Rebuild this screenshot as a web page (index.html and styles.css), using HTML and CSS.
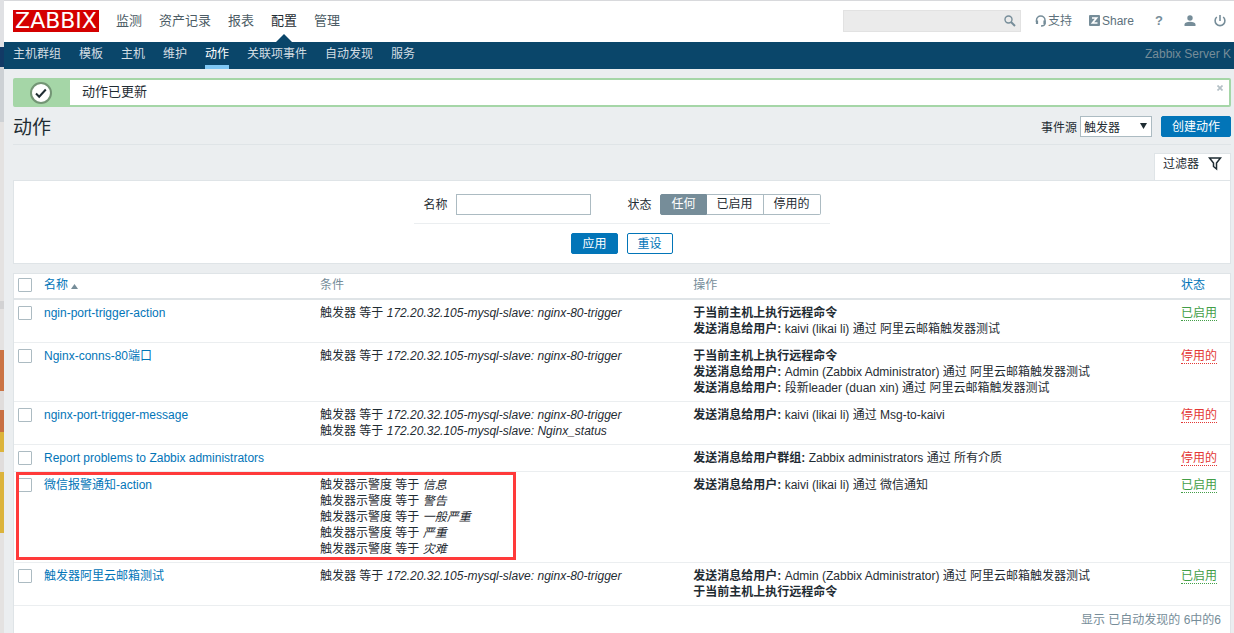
FILE: index.html
```html
<!DOCTYPE html>
<html lang="zh-CN">
<head>
<meta charset="utf-8">
<title>动作</title>
<link rel="stylesheet" href="styles.css">
</head>
<body>
<div class="backdrop"></div>
<div class="page">
  <header class="top">
    <a class="logo" href="#">ZABBIX</a>
    <nav class="menu">
      <a href="#">监测</a>
      <a href="#">资产记录</a>
      <a href="#">报表</a>
      <a href="#" class="active">配置</a>
      <a href="#">管理</a>
    </nav>
    <div class="tools">
      <form class="search">
        <input type="text" aria-label="搜索">
        <button type="button" aria-label="搜索"><svg width="12" height="12" viewBox="0 0 12 12" fill="none" stroke="#768d99"><circle cx="4.5" cy="4.5" r="3.5" stroke-width="1.4"/><path d="M7 7l4 4" stroke-width="2"/></svg></button>
      </form>
      <a href="#" class="support"><svg width="12" height="12" viewBox="0 0 12 12" fill="none" stroke="#768d99"><path d="M1.500 7V5.200a4.200 4.200 0 0 1 8.500 0V8c0 2-1 3-4 3" stroke-width="1.500"/><path d="M2 5.500v3.500M9.500 5.500v3.500" stroke-width="2.200"/></svg>支持</a>
      <a href="#" class="share"><svg width="12" height="12" viewBox="0 0 12 12"><rect width="11" height="11" rx="1" fill="#768d99"/><path d="M3 3h4.500L3.500 8H8.500" fill="none" stroke="#fff" stroke-width="1.700"/></svg>Share</a>
      <a href="#" class="help">?</a>
      <a href="#" class="user" aria-label="用户"><svg width="12" height="12" viewBox="0 0 12 12" fill="#768d99"><circle cx="6" cy="3" r="2.700"/><path d="M.5 11V9.500c0-1.700 2.500-2.700 5.500-2.700s5.500 1 5.500 2.700V11z"/></svg></a>
      <a href="#" class="power" aria-label="退出"><svg width="12" height="12" viewBox="0 0 12 12" fill="none" stroke="#768d99" stroke-width="1.600"><path d="M2.800 2a4.900 4.900 0 1 0 6.400 0M6 0v6"/></svg></a>
    </div>
  </header>
  <nav class="submenu">
    <a href="#">主机群组</a>
    <a href="#">模板</a>
    <a href="#">主机</a>
    <a href="#">维护</a>
    <a href="#" class="active">动作</a>
    <a href="#">关联项事件</a>
    <a href="#">自动发现</a>
    <a href="#">服务</a>
    <span class="server">Zabbix Server K</span>
  </nav>
  <main>
    <div class="message">
      <span class="message-icon"><svg width="22" height="22" viewBox="0 0 22 22"><circle cx="11" cy="11" r="10" fill="#fff" stroke="#739575" stroke-width="2"/><path d="M6 11.500l3.200 3.200L15.800 7.500" fill="none" stroke="#1f2c33" stroke-width="2"/></svg></span>
      <span class="message-text">动作已更新</span>
      <button type="button" class="close" aria-label="关闭"><svg width="6" height="6" viewBox="0 0 6 6" stroke="#b4c0c6" stroke-width="1.700"><path d="M.5.5l5 5M5.500.5l-5 5"/></svg></button>
    </div>

    <div class="title-bar">
      <h1>动作</h1>
      <form class="title-form">
        <label for="source">事件源</label>
        <span class="select-box">
          <select id="source"><option>触发器</option></select>
          <svg class="arrow" width="7" height="6" viewBox="0 0 7 6"><path d="M0 0h7L3.500 6z" fill="#1f2c33"/></svg>
        </span>
        <button type="button" class="button">创建动作</button>
      </form>
    </div>

    <div class="tab-row">
      <a href="#" class="filter-tab">过滤器<svg width="14" height="14" viewBox="0 0 14 14" fill="none" stroke="#1f2c33" stroke-width="1.500"><path d="M1.500 1h11L8.500 6v6L5.500 9.500V6z"/></svg></a>
    </div>
    <form class="filter">
      <div class="fields">
        <label for="name">名称</label>
        <input type="text" id="name" class="text-input">
        <span class="state-label" id="state-label">状态</span>
        <div class="segments" role="radiogroup" aria-labelledby="state-label">
          <input type="radio" name="state" id="any" checked><label for="any">任何</label>
          <input type="radio" name="state" id="on"><label for="on">已启用</label>
          <input type="radio" name="state" id="off"><label for="off">停用的</label>
        </div>
      </div>
      <div class="buttons">
        <button type="button" class="button">应用</button>
        <button type="button" class="button outline">重设</button>
      </div>
    </form>

    <div class="list">
      <table>
        <colgroup><col class="c-check"><col class="c-name"><col class="c-cond"><col><col class="c-state"></colgroup>
        <thead>
          <tr><th><input type="checkbox" aria-label="全选"></th><th><a href="#">名称<svg class="sort" width="7" height="5" viewBox="0 0 7 5"><path d="M0 5h7L3.500 0z" fill="#768d99"/></svg></a></th><th>条件</th><th>操作</th><th><a href="#">状态</a></th></tr>
        </thead>
        <tbody>
          <tr>
            <td><input type="checkbox" aria-label="ngin-port-trigger-action"></td>
            <td><a href="#">ngin-port-trigger-action</a></td>
            <td>触发器 等于 <em>172.20.32.105-mysql-slave: nginx-80-trigger</em></td>
            <td><b>于当前主机上执行远程命令</b><br><b>发送消息给用户:</b> kaivi (likai li) 通过 阿里云邮箱触发器测试</td>
            <td><a href="#" class="state on">已启用</a></td>
          </tr>
          <tr>
            <td><input type="checkbox" aria-label="Nginx-conns-80端口"></td>
            <td><a href="#">Nginx-conns-80端口</a></td>
            <td>触发器 等于 <em>172.20.32.105-mysql-slave: nginx-80-trigger</em></td>
            <td><b>于当前主机上执行远程命令</b><br><b>发送消息给用户:</b> Admin (Zabbix Administrator) 通过 阿里云邮箱触发器测试<br><b>发送消息给用户:</b> 段新leader (duan xin) 通过 阿里云邮箱触发器测试</td>
            <td><a href="#" class="state off">停用的</a></td>
          </tr>
          <tr>
            <td><input type="checkbox" aria-label="nginx-port-trigger-message"></td>
            <td><a href="#">nginx-port-trigger-message</a></td>
            <td>触发器 等于 <em>172.20.32.105-mysql-slave: nginx-80-trigger</em><br>触发器 等于 <em>172.20.32.105-mysql-slave: Nginx_status</em></td>
            <td><b>发送消息给用户:</b> kaivi (likai li) 通过 Msg-to-kaivi</td>
            <td><a href="#" class="state off">停用的</a></td>
          </tr>
          <tr>
            <td><input type="checkbox" aria-label="Report problems to Zabbix administrators"></td>
            <td><a href="#">Report problems to Zabbix administrators</a></td>
            <td></td>
            <td><b>发送消息给用户群组:</b> Zabbix administrators 通过 所有介质</td>
            <td><a href="#" class="state off">停用的</a></td>
          </tr>
          <tr>
            <td class="marked"><input type="checkbox" aria-label="微信报警通知-action"><span class="marker"></span></td>
            <td><a href="#">微信报警通知-action</a></td>
            <td>触发器示警度 等于 <em>信息</em><br>触发器示警度 等于 <em>警告</em><br>触发器示警度 等于 <em>一般严重</em><br>触发器示警度 等于 <em>严重</em><br>触发器示警度 等于 <em>灾难</em></td>
            <td><b>发送消息给用户:</b> kaivi (likai li) 通过 微信通知</td>
            <td><a href="#" class="state on">已启用</a></td>
          </tr>
          <tr>
            <td><input type="checkbox" aria-label="触发器阿里云邮箱测试"></td>
            <td><a href="#">触发器阿里云邮箱测试</a></td>
            <td>触发器 等于 <em>172.20.32.105-mysql-slave: nginx-80-trigger</em></td>
            <td><b>发送消息给用户:</b> Admin (Zabbix Administrator) 通过 阿里云邮箱触发器测试<br><b>于当前主机上执行远程命令</b></td>
            <td><a href="#" class="state on">已启用</a></td>
          </tr>
        </tbody>
      </table>
      <div class="summary">显示 已自动发现的 6中的6</div>
    </div>
  </main>
</div>
</body>
</html>
```
FILE: styles.css
```css
* { box-sizing: border-box; }

body {
  margin: 0;
  min-height: 100vh;
  display: flex;
  overflow: hidden;
  background: #ebeef0;
  color: #1f2c33;
  font: 12px/16px "Liberation Sans", "Noto Sans CJK SC", sans-serif;
}

a { color: #0275b8; text-decoration: none; }
svg { display: block; flex: none; }
input, button, select { font: inherit; color: inherit; margin: 0; }

/* Sliver of the desktop visible beside the page */
.backdrop {
  flex: none;
  width: 4px;
  background: linear-gradient(
    #e0e1e4 0 47px, #123a66 47px 67px, #cdd1d5 67px 122px,
    #e4e2e1 122px 301px, #d2d2d3 301px 309px, #e4e2e1 309px 350px,
    #cb7445 350px 391px, #e0dddc 391px 410px, #c87043 410px 432px,
    #dcb43c 432px 452px, #e0dddc 452px 472px, #dcb43c 472px 533px,
    #e4e2e1 533px);
}

.page { flex: 1; min-width: 0; }

.top {
  display: flex;
  align-items: center;
  height: 42px;
  padding: 0 8px 0 9px;
  border-top: 1px solid #d8d9dc;
  background: #fff;
}

.logo {
  align-self: flex-start;
  width: 86px;
  height: 22px;
  margin-top: 9px;
  background: #d40000;
  color: #fff;
  font-family: "DejaVu Sans", sans-serif;
  font-size: 22px;
  line-height: 22px;
  text-align: center;
}

.menu {
  align-self: stretch;
  display: flex;
  gap: 17px;
  margin-left: 17px;
  font-size: 13px;
  line-height: 40px;
}
.menu a { position: relative; color: #4c5c65; }
.menu .active { color: #1f2c33; }
.menu .active::after {
  content: "";
  position: absolute;
  left: 5px;
  bottom: 0;
  border: 8px solid transparent;
  border-top: 0;
  border-bottom-color: #0a466a;
}

.tools { display: flex; align-items: center; height: 40px; align-self: flex-start; margin-left: auto; }
.tools a { display: flex; align-items: center; gap: 1px; color: #5d717c; }
.search {
  display: flex;
  align-items: center;
  width: 178px;
  height: 22px;
  border: 1px solid #e2e2e2;
  background: #ebebeb;
}
.search input { flex: 1; min-width: 0; border: 0; background: none; outline: 0; }
.search button { padding: 0 4px; border: 0; background: none; }
.support { margin-left: 14px; }
.share { margin-left: 17px; }
.tools .help { margin-left: 21px; color: #768d99; font-size: 13px; font-weight: bold; }
.user { margin-left: 21px; }
.power { margin-left: 18px; }

.submenu {
  display: flex;
  gap: 18px;
  height: 27px;
  padding: 0 3px 0 9px;
  background: #0a466a;
  line-height: 25px;
}
.submenu a { color: #d3dde3; border-bottom: 4px solid transparent; }
.submenu .active { color: #fff; border-color: #80c8f5; }
.server { margin-left: auto; color: #768d99; }

main { padding: 9px 3px 0 9px; }

.message {
  display: flex;
  height: 29px;
  border: 2px solid #a5d6a7;
  border-radius: 2px;
  background: #fff;
}
.message-icon {
  display: flex;
  align-items: center;
  justify-content: center;
  width: 55px;
  padding-right: 3px;
  background: #a5d6a7;
}
.message-text { margin-left: 12px; font-size: 13px; line-height: 23px; }
.close { align-self: flex-start; margin-left: auto; padding: 5px 6px; border: 0; background: none; }

.title-bar {
  display: flex;
  align-items: center;
  height: 38px;
  padding-top: 2px;
  border-bottom: 1px solid #dfe4e7;
}
h1 { margin: 0; font-size: 19px; font-weight: normal; line-height: 24px; padding-top: 2px; }
.title-form { display: flex; align-items: center; margin-left: auto; }
.title-form label { padding-top: 2px; }
.select-box { position: relative; display: flex; margin: 0 9px 0 3px; }
select {
  appearance: none;
  width: 72px;
  height: 21px;
  padding: 2px 3px 0;
  border: 1px solid #acbbc2;
  border-radius: 0;
  background: #fff;
}
.arrow { position: absolute; right: 5px; top: 7px; }

.button {
  height: 21px;
  padding: 0 10px;
  border: 1px solid #0275b8;
  border-radius: 2px;
  background: #0275b8;
  color: #fff;
  line-height: 18px;
}
.outline { background: #fff; color: #0275b8; }
.buttons .button { padding: 1px 10px 0; }

.tab-row { display: flex; justify-content: flex-end; padding-top: 8px; }
.filter-tab {
  display: flex;
  align-items: center;
  gap: 9px;
  height: 27px;
  padding: 0 8px 6px;
  border: 1px solid #dfe4e7;
  border-bottom: 0;
  background: #fff;
  color: #1f2c33;
}
.filter {
  display: flex;
  flex-direction: column;
  align-items: center;
  padding: 13px 0 9px;
  border: 1px solid #dfe4e7;
  background: #fff;
}
.fields {
  display: flex;
  align-items: center;
  padding: 0 9px 8px;
  border-bottom: 1px solid #ebeef0;
}
.text-input {
  width: 135px;
  height: 21px;
  margin: 0 36px 0 9px;
  border: 1px solid #acbbc2;
}
.segments { display: flex; margin-left: 9px; }
.segments input { position: absolute; opacity: 0; }
.segments label {
  height: 21px;
  padding: 0 10px;
  border: 1px solid #acbbc2;
  border-left-width: 0;
  line-height: 18px;
}
.segments label:first-of-type { border-left-width: 1px; border-radius: 2px 0 0 2px; }
.segments label:last-of-type { border-radius: 0 2px 2px 0; }
.segments input:checked + label { border-color: #768d99; background: #768d99; color: #fff; }
.buttons { display: flex; gap: 9px; padding-top: 9px; }

.list {
  margin-top: 9px;
  min-height: 380px;
  border: 1px solid #dfe4e7;
  background: #fff;
}
table { width: 100%; table-layout: fixed; border-spacing: 0; }
.c-check { width: 25px; }
.c-name { width: 22.7%; }
.c-cond { width: 30.7%; }
.c-state { width: 54px; }
th {
  padding: 3px 5px 5px;
  border-bottom: 2px solid #dfe4e7;
  color: #768d99;
  font-weight: normal;
  text-align: left;
}
td { padding: 5px; border-bottom: 1px solid #ebeef0; vertical-align: top; }
th:first-child, td:first-child { padding-left: 4px; }
input[type="checkbox"] {
  appearance: none;
  display: block;
  width: 14px;
  height: 14px;
  margin: 1px 0;
  border: 1px solid #acbbc2;
  border-radius: 1px;
  background: #fff;
}
.sort { display: inline-block; margin-left: 3px; }
.state { display: inline-block; height: 16px; border-bottom: 1px dotted; }
.on { color: #429e47; }
.off { color: #e33734; }

.marked { position: relative; }
.marker {
  position: absolute;
  top: 0;
  left: 2px;
  width: 500px;
  height: 88px;
  border: 3px solid #ff3a3a;
  pointer-events: none;
}

.summary { padding: 6px 9px; color: #768d99; text-align: right; }
```
